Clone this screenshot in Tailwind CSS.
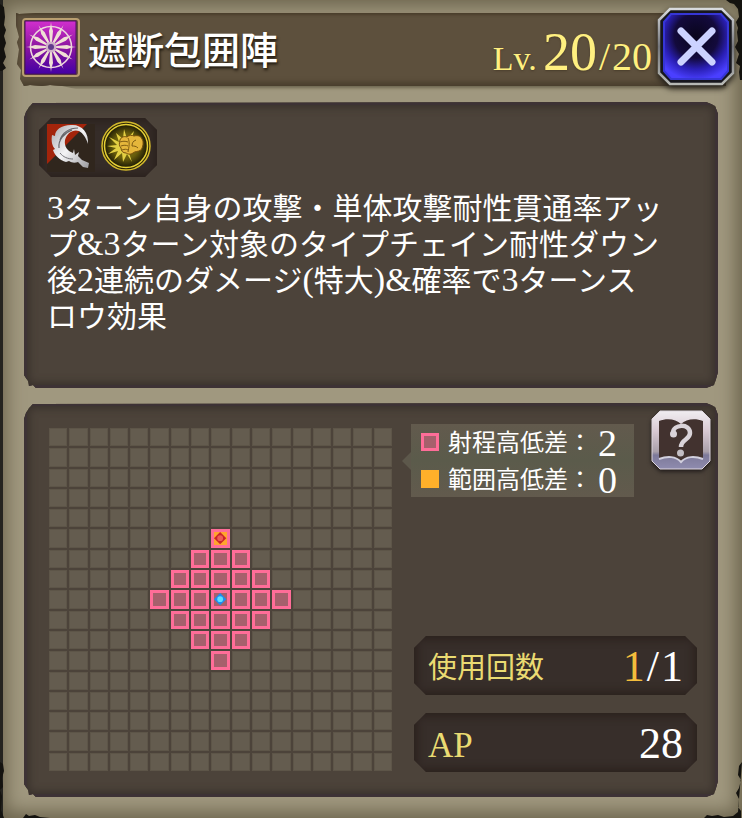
<!DOCTYPE html>
<html lang="ja">
<head>
    <meta charset="UTF-8">
    <meta name="viewport" content="width=device-width, initial-scale=1.0">
    <title>遮断包囲陣</title>
    <script src="https://cdn.jsdelivr.net/npm/@tailwindcss/browser@4"></script>
</head>
<body class="relative min-h-screen bg-[#a0987f] pt-[13px] pb-5 font-['Liberation_Serif','Noto_Sans_CJK_JP',serif] text-white shadow-[inset_3px_0_0_#24231f,inset_0_0_18px_6px_#6b634c]">
    <!-- torn paper edges -->
    <svg class="absolute left-0 top-0" width="8" height="80" viewBox="0 0 8 80" fill="#14130f"><path d="M0 4l4 3 1 10-1 8 2 5-2 6 2 7-2 6 2 8-3 6 3 5-4 3H0z"/></svg>
    <svg class="absolute right-0 top-0" width="20" height="80" viewBox="0 0 20 80" fill="#14130f"><path d="M4 0h16v80h-2l-1-8 1-6-4-3 3-9-4-7 3-6-1-9 1-4-2-6 3-5-1-8-4-5-4-1z"/></svg>
    <svg class="absolute left-0 bottom-0" width="60" height="60" viewBox="0 0 60 60" fill="#14130f"><path d="M0 4l3 2 1 7-2 7 1 9-3 3 2 6-1 14 3 8H0zM23 60l3-4 3 2 6-1 5 2 10 1z"/></svg>
    <svg class="absolute right-0 bottom-0" width="42" height="60" viewBox="0 0 42 60" fill="#14130f"><path d="M42 4l-3 4-1 9 3 5-2 8-3 5 3 6-1 8 3 4v7H4l3-3 5 1 6-1 6 2 9-1 5-4z"/></svg>

    <header class="relative mx-4 flex h-[73px] items-center bg-[#5d503d] pl-1.5 shadow-[inset_0_2px_3px_#4a3d2b,inset_0_-4px_5px_#4a3f2e,0_2px_3px_#6e6650] [clip-path:polygon(0_0,3px_1px,20px_0,calc(100%+30px)_-10px,calc(100%+30px)_calc(100%+14px),60px_calc(100%+3px),46px_100%,34px_calc(100%-1px),26px_100%,14px_calc(100%-1px),8px_100%,4px_calc(100%-7px),5px_calc(100%-16px),1px_calc(100%-22px),3px_50%,1px_40%,3px_24px,0_12px)]">
        <svg class="-mt-1 shrink-0" width="58" height="59" viewBox="0 0 58 59">
            <defs>
                <linearGradient id="wheelBg" x1="0" y1="0" x2="0" y2="1">
                    <stop offset="0" stop-color="#d22fce"/>
                    <stop offset=".5" stop-color="#8a159f"/>
                    <stop offset="1" stop-color="#4400a4"/>
                </linearGradient>
            </defs>
            <rect x="1" y="1" width="56" height="57" rx="3" fill="#67513d" stroke="#b99e70" stroke-width="2"/>
            <rect x="3" y="3" width="51" height="53" fill="url(#wheelBg)" stroke="#48105e" stroke-width="1"/>
            <g id="spokes" fill="#f0dfd5"></g>
            <circle cx="29" cy="29" r="20.500" fill="none" stroke="#edd5dc" stroke-width="1.600"/>
            <circle cx="29" cy="29" r="5.500" fill="#cfaec8"/>
            <circle cx="29" cy="29" r="3" fill="#623a8c"/>
        </svg>
        <h1 class="ml-2 pt-0.5 text-[38px] leading-none font-medium [text-shadow:1px_2px_3px_#1b150c]">遮断包囲陣</h1>
        <p class="ml-auto flex items-baseline pt-1 text-[#fff080] leading-none [text-shadow:0_1px_2px_#4a3d2b]">
            <span class="text-[34px]">Lv.</span>
            <span class="ml-1.5 text-[54px]">20</span>
            <span class="mx-0.5 text-[40px]">/</span>
            <span class="text-[40px]">20</span>
        </p>
        <button type="button" aria-label="閉じる" class="relative -mr-2 ml-1.5 -mt-1.5 shrink-0">
            <svg class="block overflow-visible drop-shadow-[0_3px_3px_#1d1a14]" width="76" height="77" viewBox="0 0 76 77">
                <defs>
                    <linearGradient id="steel" x1="0" y1="0" x2="0" y2="1">
                        <stop offset="0" stop-color="#d8dadd"/>
                        <stop offset=".5" stop-color="#74767c"/>
                        <stop offset="1" stop-color="#b7b9b5"/>
                    </linearGradient>
                    <radialGradient id="blueGlow" cx=".5" cy=".34" r=".68">
                        <stop offset="0" stop-color="#09051c"/>
                        <stop offset=".5" stop-color="#130a3c"/>
                        <stop offset=".75" stop-color="#2a1fb5"/>
                        <stop offset="1" stop-color="#4a3fff"/>
                    </radialGradient>
                </defs>
                <path d="M12 1h52l11 11v53L64 76H12L1 65V12z" fill="#17171e" stroke="url(#steel)" stroke-width="2.500"/>
                <path d="M13 6h50l7 8v49l-7 8H13l-7-8V14z" fill="url(#blueGlow)" stroke="#3636d6" stroke-width="2"/>
                <path d="M23 23l31 31M54 23L23 54" stroke="#ccd2ff" stroke-width="7" stroke-linecap="round"/>
            </svg>
        </button>
    </header>

    <main class="mx-6 mt-4 flex flex-col gap-[15px]">
        <section class="min-h-[286px] bg-[#4c433a] px-[15px] pt-4 pb-6 shadow-[inset_0_0_0_3px_#3d3235,inset_0_0_8px_5px_#38302b] [clip-path:polygon(2px_10px,5px_5px,9px_1px,calc(100%-12px)_0,calc(100%-7px)_2px,calc(100%-3px)_4px,100%_12px,100%_calc(100%-16px),calc(100%-2px)_calc(100%-9px),calc(100%-4px)_calc(100%-3px),calc(100%-12px)_100%,12px_100%,9px_calc(100%-3px),5px_calc(100%-2px),4px_calc(100%-7px),0_calc(100%-13px),0_16px)]">
            <div class="flex h-[59px] w-[118px] items-center gap-1.5 bg-[#352c28] pb-1 pl-2 shadow-[inset_0_0_8px_3px_#2a201c] [clip-path:polygon(12px_0,calc(100%-12px)_0,100%_12px,100%_calc(100%-12px),calc(100%-12px)_100%,12px_100%,0_calc(100%-12px),0_12px)]">
                <svg class="mt-1" width="48" height="48" viewBox="0 0 48 48">
                    <defs>
                        <linearGradient id="blade" x1="0" y1="0" x2="1" y2="1">
                            <stop offset="0" stop-color="#a9a9ad"/>
                            <stop offset=".5" stop-color="#f4f4f6"/>
                            <stop offset="1" stop-color="#9a9a9e"/>
                        </linearGradient>
                    </defs>
                    <path d="M0 0h48v48H0z" fill="#30261d"/>
                    <path d="M0 0h40L0 40z" fill="#a3240b"/>
                    <path d="M41 20C42 8 34 0 24 1 14 1 8 6 8 12l-3-1c-1 6 0 11 3 14l-2 1c2 6 7 10 13 12l3-1c3 2 6 2 9 1l5 5 5 1 1-5-7-3-4-4 1-4-4 3-1-6-1 4c-6-2-9-7-8-13C20 9 26 5 32 7c4 2 7 7 9 13z" fill="url(#blade)"/>
                    <path d="M13 16c2-7 9-12 18-12M12 24c-1-8 5-15 13-18" fill="none" stroke="#65656a" stroke-width="1.200"/>
                    <path d="M13 29c3 4 8 6 13 6" fill="none" stroke="#77777c"/>
                </svg>
                <svg width="50" height="50" viewBox="0 0 50 50">
                    <defs>
                        <radialGradient id="coin">
                            <stop offset="0" stop-color="#8f8318"/>
                            <stop offset=".6" stop-color="#665b0b"/>
                            <stop offset="1" stop-color="#1d1a05"/>
                        </radialGradient>
                    </defs>
                    <circle cx="25" cy="25" r="24" fill="#2b2506" stroke="#d3b92c" stroke-width="1.500"/>
                    <circle cx="25" cy="25" r="21.500" fill="url(#coin)" stroke="#e5cf35" stroke-width="1.500"/>
                    <path d="M22 18l1-10 3 10 7-8-3 10-2 12 3 9-5-8-4 8-1-9-8 7 4-9-10 3 8-6-9-2 10-1-8-8 10 5-3-9z" fill="#e3cf43"/>
                    <path d="M19 19c1-3 4-4 7-3 2-2 5-2 7-1 4-1 7 0 8 3 2 3 1 8-1 11-3 2-6 1-8 3-3 2-5 1-7 0-3 0-5-2-5-5-2-2-2-5-1-8z" fill="#e5b63b" stroke="#77500d"/>
                    <path d="M19 21c3-1 5-1 8 0M20 25c3-1 5-1 7 0M21 29c3-1 4-1 6 0M27 17c2 4 1 9 0 14M35 19c-3 1-4 3-4 6 2 0 4 0 6 2" fill="none" stroke="#7e5b12"/>
                </svg>
            </div>
            <p class="mt-[14px] pl-2 text-[30px] leading-[36px] whitespace-nowrap">
                <span class="text-[34px] leading-0">3</span>ターン自身の攻撃・単体攻撃耐性貫通率アッ<br>
                プ<span class="text-[34px] leading-0">&amp;3</span>ターン対象のタイプチェイン耐性ダウン<br>
                後<span class="text-[34px] leading-0">2</span>連続のダメージ<span class="text-[34px] leading-0">(</span>特大<span class="text-[34px] leading-0">)&amp;</span>確率で<span class="text-[34px] leading-0">3</span>ターンス<br>
                ロウ効果
            </p>
        </section>

        <section class="flex min-h-[394px] bg-[#4c433a] pt-[7px] pr-[7px] pb-[25px] pl-[25px] shadow-[inset_0_0_0_3px_#3d3235,inset_0_0_8px_5px_#38302b] [clip-path:polygon(2px_10px,5px_5px,9px_1px,calc(100%-12px)_0,calc(100%-7px)_2px,calc(100%-3px)_4px,100%_12px,100%_calc(100%-16px),calc(100%-2px)_calc(100%-9px),calc(100%-4px)_calc(100%-3px),calc(100%-12px)_100%,12px_100%,9px_calc(100%-3px),5px_calc(100%-2px),4px_calc(100%-7px),0_calc(100%-13px),0_16px)]">
            <div id="range-grid" class="mt-[18px] grid h-[343px] w-[343px] shrink-0 grid-cols-17 grid-rows-17 gap-0.5"></div>

            <div class="ml-[19px] flex flex-1 flex-col">
                <div class="flex items-start justify-between">
                    <div class="relative mt-[14px] flex h-[73px] w-[223px] flex-col justify-center bg-linear-to-b from-[#625a4d] via-[#5b5b4b] to-[#625a4d] pl-2.5">
                        <div class="absolute top-7 -left-[9px] h-[18px] w-[9px] bg-[#5d584b] [clip-path:polygon(100%_0,100%_100%,0_50%)]"></div>
                        <div class="flex h-[37px] items-center">
                            <span class="size-[18px] border-3 border-[#ff6d98] bg-[#a6606c]"></span>
                            <span class="ml-[9px] pt-0.5 text-[24px] leading-none">射程高低差：</span>
                            <span class="ml-1.5 pt-0.5 text-[38px] leading-none">2</span>
                        </div>
                        <div class="flex h-[37px] items-center">
                            <span class="size-[18px] bg-[#ffb02a]"></span>
                            <span class="ml-[9px] pt-0.5 text-[24px] leading-none">範囲高低差：</span>
                            <span class="ml-1.5 pt-0.5 text-[38px] leading-none">0</span>
                        </div>
                    </div>
                    <button type="button" aria-label="ヘルプ">
                        <svg class="block drop-shadow-[0_2px_2px_#1d1818]" width="60" height="61" viewBox="0 0 60 61">
                            <defs>
                                <linearGradient id="silver" x1="0" y1="0" x2="0" y2="1">
                                    <stop offset="0" stop-color="#f0edf1"/>
                                    <stop offset=".35" stop-color="#d8c8d2"/>
                                    <stop offset=".7" stop-color="#aaa0aa"/>
                                    <stop offset=".76" stop-color="#7d7999"/>
                                    <stop offset="1" stop-color="#8f8caf"/>
                                </linearGradient>
                            </defs>
                            <path d="M9 1h42l8 8v42l-8 8H9l-8-8V9z" fill="url(#silver)" stroke="#ded6de" stroke-width="1"/>
                            <path d="M8 11c8-3 17-2 22 3 5-5 14-6 22-3v38c-8-3-17-3-22 3-5-6-14-6-22-3z" fill="#42322f"/>
                            <path d="M8 49c8-3 17-3 22 3 5-6 14-6 22-3" fill="none" stroke="#d2d0df" stroke-width="2"/>
                            <path d="M22 23c0-9 17-10 17 0 0 7-9 6-9 14" fill="none" stroke="#dad3d9" stroke-width="4.500"/>
                            <circle cx="22.500" cy="24" r="3.500" fill="#dad3d9"/>
                            <circle cx="29.500" cy="43" r="3.500" fill="#c3bec4"/>
                        </svg>
                    </button>
                </div>

                <dl class="mt-auto mr-[14px] ml-[3px] flex flex-col gap-[18px] leading-none">
                    <div class="flex h-[59px] items-center justify-between bg-[#372e2a] px-[14px] shadow-[inset_0_0_8px_3px_#2a201c] [clip-path:polygon(12px_0,calc(100%-12px)_0,100%_12px,100%_calc(100%-12px),calc(100%-12px)_100%,12px_100%,0_calc(100%-12px),0_12px)]">
                        <dt class="pt-1.5 text-[29px] text-[#eadb72]">使用回数</dt>
                        <dd class="flex pt-0.5 text-[44px]"><span class="text-[#f3bd3c]">1</span><span class="mx-0.5">/</span><span>1</span></dd>
                    </div>
                    <div class="flex h-[59px] items-center justify-between bg-[#372e2a] px-[14px] shadow-[inset_0_0_8px_3px_#2a201c] [clip-path:polygon(12px_0,calc(100%-12px)_0,100%_12px,100%_calc(100%-12px),calc(100%-12px)_100%,12px_100%,0_calc(100%-12px),0_12px)]">
                        <dt class="pt-1.5 text-[35px] text-[#eadb72]">AP</dt>
                        <dd class="pt-0.5 text-[44px]">28</dd>
                    </div>
                </dl>
            </div>
        </section>
    </main>

    <script>
        // Wheel spokes in the skill icon
        const spokes = document.getElementById("spokes");
        for (let i = 0; i < 12; i++) {
            const spoke = document.createElementNS("http://www.w3.org/2000/svg", "path");
            spoke.setAttribute("d", "M28 24L27 13l1.500-5 .5-4 .5 4L31 13l-1 11z");
            spoke.setAttribute("transform", "rotate(" + i * 30 + " 29 29)");
            spokes.appendChild(spoke);
        }

        // Range map: 17x17, user in the middle, range 3
        const size = 17;
        const center = 8;
        const range = 3;
        const grid = document.getElementById("range-grid");

        for (let y = 0; y < size; y++) {
            for (let x = 0; x < size; x++) {
                const cell = document.createElement("div");
                const distance = Math.abs(x - center) + Math.abs(y - center);

                if (x === center && y === center - range) {
                    cell.className = "border-3 border-[#ff6d98] bg-[#ffa52d]";
                    cell.innerHTML = '<svg class="block size-full" viewBox="0 0 12 12"><path d="M6 0l6 6-6 6-6-6z" fill="#c9242a"/><circle cx="6" cy="6" r="2.800" fill="#f05a55"/></svg>';
                } else if (distance === 0) {
                    cell.className = "border-3 border-[#ff6d98] bg-[#a6606c]";
                    cell.innerHTML = '<svg class="block size-full" viewBox="0 0 12 12"><path d="M6 0l6 6-6 6-6-6z" fill="#1e8cf0"/><circle cx="6" cy="6" r="2.800" fill="#5fe0ff"/></svg>';
                } else if (distance <= range) {
                    cell.className = "border-3 border-[#ff6d98] bg-[#a6606c]";
                } else {
                    cell.className = "border border-[#5d5548] bg-[#645c4f]";
                }
                grid.appendChild(cell);
            }
        }
    </script>
</body>
</html>
